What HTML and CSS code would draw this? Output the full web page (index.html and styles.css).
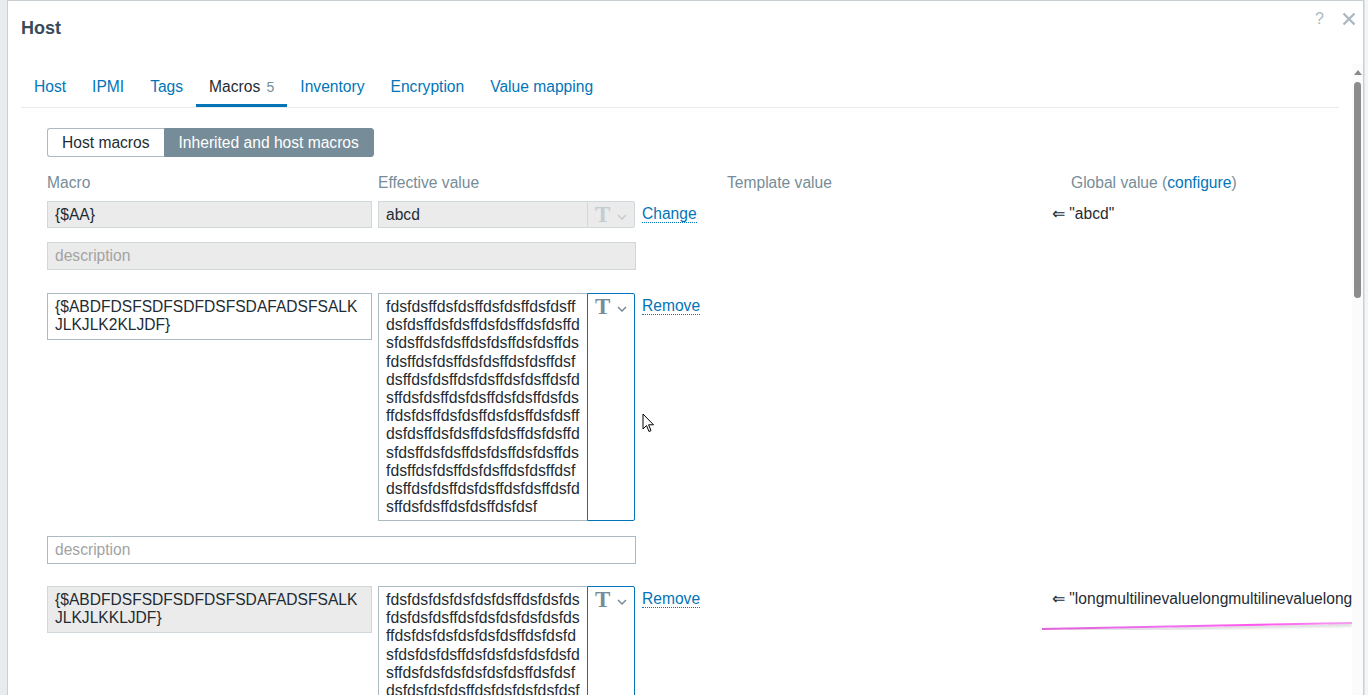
FILE: index.html
```html
<!DOCTYPE html>
<html lang="en">
<head>
<meta charset="utf-8">
<title>Host</title>
<link rel="stylesheet" href="styles.css">
</head>
<body>
<div class="page">
  <div class="modal">
    <div class="head">
      <h1 class="title">Host</h1>
      <div class="controls">
        <span class="help">?</span>
        <svg class="close" width="14" height="14" viewBox="0 0 14 14"><path d="M1.5 1.5 L12.5 12.5 M12.5 1.5 L1.5 12.5" stroke="#aab8c0" stroke-width="2.4" fill="none"/></svg>
      </div>
    </div>
    <div class="body">
      <div class="content">
        <ul class="tabs">
          <li><a>Host</a></li>
          <li><a>IPMI</a></li>
          <li><a>Tags</a></li>
          <li class="active"><a>Macros <span class="count">5</span></a></li>
          <li><a>Inventory</a></li>
          <li><a>Encryption</a></li>
          <li><a>Value mapping</a></li>
        </ul>
        <div class="form">
          <div class="seg">
            <span class="seg-item">Host macros</span>
            <span class="seg-item on">Inherited and host macros</span>
          </div>

          <div class="row hdr">
            <div class="c-macro">Macro</div>
            <div class="c-value">Effective value</div>
            <div class="c-action"></div>
            <div class="c-template">Template value</div>
            <div class="c-global g-hdr">Global value (<a class="lnk">configure</a>)</div>
          </div>

          <div class="row r1">
            <div class="c-macro"><input class="fld single ro" value="{$AA}" readonly></div>
            <div class="c-value group">
              <input class="fld single ro val-text" value="abcd" readonly>
              <div class="val-btn ro"><span class="tglyph">T</span><svg class="chev" width="10" height="6" viewBox="0 0 10 6"><polyline points="1,1 5,5 9,1" fill="none" stroke="#c3ccd1" stroke-width="1.5"/></svg></div>
            </div>
            <div class="c-action"><a class="act">Change</a></div>
            <div class="c-template"></div>
            <div class="c-global gval">⇐ "abcd"</div>
          </div>
          <div class="row desc-row d1">
            <input class="fld desc ro" placeholder="description" readonly>
          </div>

          <div class="row r2">
            <div class="c-macro"><textarea class="fld multi m2" wrap="off">{$ABDFDSFSDFSDFDSFSDAFADSFSALK
JLKJLK2KLJDF}</textarea></div>
            <div class="c-value group">
              <textarea class="fld multi val-text v2" wrap="off">fdsfdsffdsfdsffdsfdsffdsfdsff
dsfdsffdsfdsffdsfdsffdsfdsffd
sfdsffdsfdsffdsfdsffdsfdsffds
fdsffdsfdsffdsfdsffdsfdsffdsf
dsffdsfdsffdsfdsffdsfdsffdsfd
sffdsfdsffdsfdsffdsfdsffdsfds
ffdsfdsffdsfdsffdsfdsffdsfdsff
dsfdsffdsfdsffdsfdsffdsfdsffd
sfdsffdsfdsffdsfdsffdsfdsffds
fdsffdsfdsffdsfdsffdsfdsffdsf
dsffdsfdsffdsfdsffdsfdsffdsfd
sffdsfdsffdsfdsffdsfdsf</textarea>
              <div class="val-btn"><span class="tglyph">T</span><svg class="chev" width="10" height="6" viewBox="0 0 10 6"><polyline points="1,1 5,5 9,1" fill="none" stroke="#768d99" stroke-width="1.5"/></svg></div>
            </div>
            <div class="c-action"><a class="act">Remove</a></div>
            <div class="c-template"></div>
            <div class="c-global"></div>
          </div>
          <div class="row desc-row d2">
            <input class="fld desc" placeholder="description">
          </div>

          <div class="row r3">
            <div class="c-macro"><textarea class="fld multi m2 ro" wrap="off" readonly>{$ABDFDSFSDFSDFDSFSDAFADSFSALK
JLKJLKKLJDF}</textarea></div>
            <div class="c-value group">
              <textarea class="fld multi val-text v3" wrap="off">fdsfdsfdsfdsfdsfdsffdsfdsfds
fdsfdsfdsffdsfdsfdsfdsfdsfds
ffdsfdsfdsfdsfdsfdsffdsfdsfd
sfdsfdsfdsffdsfdsfdsfdsfdsfd
sffdsfdsfdsfdsfdsfdsffdsfdsf
dsfdsfdsfdsffdsfdsfdsfdsfdsf
fdsfdsfdsfdsfdsfdsffdsfdsfds
fdsfdsfdsffdsfdsfdsfdsfdsfds</textarea>
              <div class="val-btn"><span class="tglyph">T</span><svg class="chev" width="10" height="6" viewBox="0 0 10 6"><polyline points="1,1 5,5 9,1" fill="none" stroke="#768d99" stroke-width="1.5"/></svg></div>
            </div>
            <div class="c-action"><a class="act">Remove</a></div>
            <div class="c-template"></div>
            <div class="c-global">
              <div class="gval long">⇐ "longmultilinevaluelongmultilinevaluelong</div>
              <div class="pinkline"></div>
            </div>
          </div>
        </div>
      </div>
      <div class="scrollbar"><span class="sb-arrow"></span><span class="sb-thumb"></span></div>
    </div>
  </div>
  <div class="edge"></div>
</div>
<svg class="cursor" width="13" height="20" viewBox="0 0 13 20"><path d="M1 1 L1 16 L4.5 12.5 L7 18.5 L9 17.6 L6.6 11.8 L11.5 11.8 Z" fill="#fff" stroke="#000" stroke-width="1"/></svg>
</body>
</html>
```

FILE: styles.css
```css
html, body {
  margin: 0;
  padding: 0;
  height: 695px;
  overflow: hidden;
}
body {
  font-family: "Liberation Sans", Arial, sans-serif;
  font-size: 15.6px;
  color: #1f2c33;
  background: #e4e8eb;
  position: relative;
}
.page {
  display: flex;
  height: 695px;
  padding-left: 7px;
  background: linear-gradient(to right, #e9ecef, #dfe4e7);
}
.edge {
  width: 4px;
  background: #f3f5f6;
  border-left: 1px solid #dde3e6;
}
.modal {
  width: 1357px;
  flex: none;
  height: 720px;
  box-sizing: border-box;
  border: 1px solid #c8d0d4;
  background: #fff;
  display: flex;
  flex-direction: column;
}
.head {
  height: 63px;
  flex: none;
  box-sizing: border-box;
  padding: 18px 7px 0 13px;
  display: flex;
  justify-content: space-between;
  align-items: flex-start;
}
.title {
  margin: 0;
  font-size: 18px;
  line-height: 18px;
  font-weight: bold;
  color: #384b58;
}
.controls {
  display: flex;
  align-items: center;
  margin-top: -8px;
  gap: 18px;
}
.help {
  color: #aab8c0;
  font-size: 16px;
  line-height: 16px;
}
.close { display: block; }
.body {
  flex: 1;
  display: flex;
  min-height: 0;
}
.content {
  flex: 1;
  min-width: 0;
  padding: 5px 0 0 13px;
  overflow: hidden;
}
.tabs {
  list-style: none;
  margin: 0 13px 0 0;
  padding: 0;
  display: flex;
  border-bottom: 1px solid #ebebeb;
}
.tabs a {
  display: block;
  padding: 9px 13px 8px;
  line-height: 18px;
  color: #0275b8;
  border-bottom: 3px solid transparent;
}
.tabs .active a {
  color: #1f2c33;
  border-bottom-color: #0275b8;
}
.count {
  color: #768d99;
  font-size: 14px;
  margin-left: 2px;
}
.form {
  padding: 20px 0 0 26px;
}
.seg {
  display: inline-flex;
}
.seg-item {
  padding: 0 14px;
  line-height: 27px;
  border: 1px solid #acbbc2;
  color: #1f2c33;
}
.seg-item:first-child {
  border-radius: 3px 0 0 3px;
  border-right: none;
}
.seg-item.on {
  background: #768d99;
  border-color: #768d99;
  color: #fff;
  border-radius: 0 3px 3px 0;
}
.row {
  display: flex;
  align-items: flex-start;
}
.hdr {
  margin-top: 17px;
  line-height: 18px;
  color: #768d99;
}
.c-macro { width: 325px; margin-right: 6px; flex: none; }
.c-value { width: 257px; margin-right: 7px; flex: none; }
.c-action { width: 85px; flex: none; padding-top: 4px; line-height: 18px; }
.hdr .c-action { padding-top: 0; }
.c-template { width: 315px; flex: none; }
.c-global { flex: 1; min-width: 0; overflow: hidden; }
.g-hdr { padding-left: 29px; }
.lnk { color: #0275b8; }
.r1 { margin-top: 9px; }
.d1 { margin-top: 14px; }
.r2 { margin-top: 23px; }
.d2 { margin-top: 15px; }
.r3 { margin-top: 22px; }
.fld {
  display: block;
  box-sizing: border-box;
  width: 100%;
  margin: 0;
  border: 1px solid #acbbc2;
  background: #fff;
  color: #1f2c33;
  font-family: "Liberation Sans", Arial, sans-serif;
  font-size: 15.6px;
  outline: none;
}
.fld.ro {
  background: #ebebeb;
  border-color: #d0d8dc;
}
.fld::placeholder { color: #a3a3a3; }
.single {
  height: 27px;
  padding: 0 7px;
  line-height: 25px;
}
.desc {
  width: 589px;
  height: 28px;
  padding: 0 7px;
  line-height: 26px;
}
.multi {
  padding: 4px 7px;
  line-height: 18.2px;
  resize: none;
  overflow: hidden;
  white-space: pre;
}
.val-text.multi { font-size: 15.8px; }
.m2 { height: 47px; }
.group { display: flex; }
.val-text {
  width: 209px;
  flex: none;
  border-right: none;
}
.v2 { height: 228px; }
.v3 { height: 200px; }
.val-btn {
  width: 48px;
  flex: none;
  box-sizing: border-box;
  border: 1px solid #0275b8;
  border-radius: 0 2px 2px 0;
  display: flex;
  align-items: flex-start;
  padding: 1px 0 0 7px;
  align-self: stretch;
  background: #fff;
}
.val-btn.ro {
  height: 27px;
  background: #ebebeb;
  border-color: #d0d8dc;
}
.tglyph {
  font-family: "Liberation Serif", "Times New Roman", serif;
  font-weight: bold;
  font-size: 23px;
  line-height: 23px;
  color: #768d99;
}
.val-btn.ro .tglyph { color: #c3ccd1; }
.chev {
  display: block;
  margin: 11px 0 0 7px;
}
.act {
  color: #0275b8;
  border-bottom: 1px dotted #0275b8;
}
.gval {
  padding: 4px 0 0 10px;
  line-height: 18px;
  white-space: nowrap;
  overflow: hidden;
}
.pinkline {
  margin-top: 20px;
  width: 310px;
  height: 2px;
  background: linear-gradient(to right, #e060d8, #f070f0 40%, #ff55ee 70%, #f5a0f0);
  box-shadow: 0 2px 3px rgba(0, 0, 0, 0.22);
  transform: rotate(-1.1deg);
  transform-origin: left center;
}
.scrollbar {
  width: 11px;
  flex: none;
  background: #fbfbfb;
  display: flex;
  flex-direction: column;
  align-items: center;
  padding-top: 6px;
}
.sb-arrow {
  width: 0;
  height: 0;
  border-left: 4px solid transparent;
  border-right: 4px solid transparent;
  border-bottom: 5px solid #8a8a8a;
}
.sb-thumb {
  margin-top: 7px;
  width: 7px;
  height: 216px;
  border-radius: 4px;
  background: #8c8c8c;
}
.cursor {
  position: absolute;
  left: 642px;
  top: 413px;
}
```
